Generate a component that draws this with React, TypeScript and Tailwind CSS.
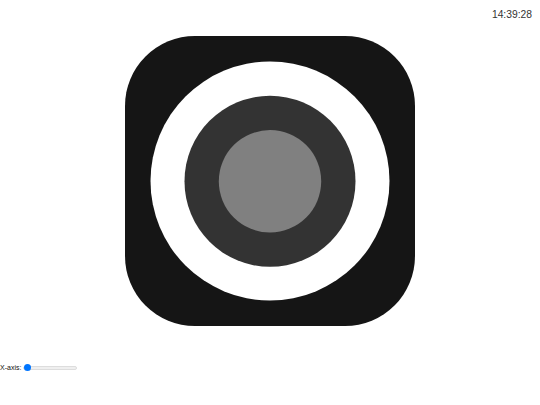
const App = () => {
	return (
		<div className="relative h-[405px] w-[540px] overflow-hidden bg-white font-['Liberation_Sans',Arial,sans-serif]">
			<div className="flex justify-end pt-[8px] pr-[8px] text-[10.3px] leading-[13px] text-[#333333]">
				14:39:28
			</div>
			<div className="flex justify-center pt-[15px]">
				<svg width="290" height="290" viewBox="0 0 290 290">
					<rect width="290" height="290" rx="70" fill="#151515" />
					<circle cx="145" cy="145" r="119.5" fill="#ffffff" />
					<circle cx="145" cy="145.3" r="85.5" fill="#333333" />
					<circle cx="145" cy="145.3" r="51.2" fill="#808080" />
				</svg>
			</div>
			<div className="flex items-center gap-[2px] pt-[37px] text-[7px] leading-[9px] text-[#111111]">
				<label htmlFor="x-axis">X-axis:</label>
				<input
					id="x-axis"
					type="range"
					min={0}
					max={100}
					defaultValue={0}
					className="h-[4px] w-[54px] appearance-none rounded-full border-[0.5px] border-[#dddddd] bg-[#efefef] [&::-webkit-slider-thumb]:h-[7px] [&::-webkit-slider-thumb]:w-[7px] [&::-webkit-slider-thumb]:appearance-none [&::-webkit-slider-thumb]:rounded-full [&::-webkit-slider-thumb]:bg-[#0075ff]"
				/>
			</div>
		</div>
	);
};

export default App;
